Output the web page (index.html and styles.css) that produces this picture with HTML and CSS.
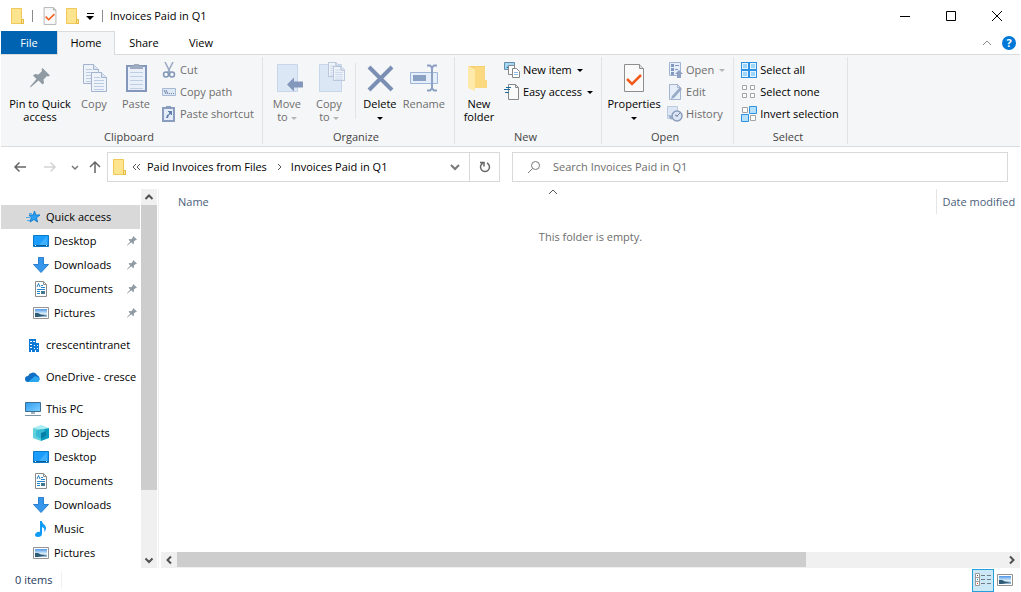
FILE: index.html
```
<!DOCTYPE html>
<html lang="en">

<head>
    <meta charset="UTF-8">
    <meta name="viewport" content="width=device-width, initial-scale=1.0">
    <title>Invoices Paid in Q1</title>
    <link rel="stylesheet" href="styles.css">
</head>

<body>
    <!-- shared icons -->
    <svg class="defs" width="0" height="0">
        <defs>
            <linearGradient id="sky" x1="0" y1="0" x2="0" y2="1">
                <stop offset="0" stop-color="#4d94e8" />
                <stop offset="0.55" stop-color="#d5ecf8" />
            </linearGradient>
            <linearGradient id="screen" x1="0" y1="0" x2="1" y2="1">
                <stop offset="0" stop-color="#2f9bf0" />
                <stop offset="1" stop-color="#7fd0ff" />
            </linearGradient>
        </defs>
        <symbol id="folder" viewBox="0 0 16 18">
            <path d="M2.500 1.500h10v11h2v4h-12z" fill="#ffe48f" stroke="#efc958" />
            <path d="M12.500 12.500h2v4h-2z" fill="#ffe9a2" stroke="#e5b93c" />
        </symbol>
        <symbol id="sheet-check" viewBox="0 0 32 32">
            <path d="M6.500 2.500h15l4 4v23h-19z" fill="#fafafa" stroke="#8e8e8e" />
            <path d="M21.500 2.500v4h4" fill="#ddd" stroke="#8e8e8e" />
            <path d="M9 17l5 5 9-9" fill="none" stroke="#f25c1b" stroke-width="2.500" />
        </symbol>
        <symbol id="pin" viewBox="0 0 20 20">
            <path d="M12.500 0L20 7.500l-2 1-1-.5-3.500 3.500.5 3.500-1.500 1.500-4-4L1 19l-1 .5.5-1.500 6-7-3.500-3.500L5 6l3.500.5L12 3l-.5-1.500z" fill="#8f9aa3" />
        </symbol>
        <symbol id="desktop" viewBox="0 0 16 16">
            <path d="M.5 2.500h15v11H.5z" fill="#1a9dfd" stroke="#0b79c9" />
            <path d="M6 12l8-9v9z" fill="#3fb0ff" />
            <path d="M1 12.500h14" stroke="#075c9c" />
            <path d="M2 12.500h1M13 12.500h1" stroke="#fff" />
        </symbol>
        <symbol id="download" viewBox="0 0 16 16">
            <path d="M5.500.5h5v7h5L8 15.500.5 7.500h5z" fill="#3796ea" stroke="#2a7fce" />
        </symbol>
        <symbol id="document" viewBox="0 0 16 16">
            <path d="M2.500.5h8l3 3v12h-11z" fill="#fff" stroke="#8c8c8c" />
            <path d="M10.500.5v3h3" fill="none" stroke="#8c8c8c" />
            <path d="M4 6l1.500-3.500L7 6M8 4.500h2M8 6.500h4M4 8.500h8M4 10.500h3M4 12.500h3" fill="none" stroke="#2684c8" />
            <path d="M8 10h4v3H8z" fill="#3f7895" />
        </symbol>
        <symbol id="picture" viewBox="0 0 16 16">
            <path d="M.5 2.500h15v11H.5z" fill="#fff" stroke="#939393" />
            <path d="M2 4h12v8H2z" fill="url(#sky)" />
            <path d="M2 8l3 0 3 1.500 6 .5v2H2z" fill="#315c78" />
            <path d="M5 12l9-2v2z" fill="#8fb4cc" />
        </symbol>
        <symbol id="up" viewBox="0 0 16 16">
            <path d="M4.500 10L8 6.500l3.500 3.500" fill="none" stroke="#505050" stroke-width="2" />
        </symbol>
        <symbol id="down" viewBox="0 0 16 16">
            <path d="M4.500 6.500L8 10l3.500-3.500" fill="none" stroke="#505050" stroke-width="2" />
        </symbol>
        <symbol id="dim-sheet" viewBox="0 0 16 20">
            <path d="M.5.5h10l5 5v14H.5z" fill="#eef3fa" stroke="#a3b3ce" />
            <path d="M10.500.5v5h5" fill="#dbe5f2" stroke="#a3b3ce" />
            <path d="M3 5.500h6M3 8.500h10M3 11.500h10M3 14.500h10M3 17.500h10" stroke="#bccbe4" />
        </symbol>
    </svg>

    <div class="window">
        <header class="titlebar">
            <svg class="title-icon" width="16" height="18"><use href="#folder" /></svg>
            <span class="bar"></span>
            <button class="quick" aria-label="Properties"><svg width="20" height="20"><use href="#sheet-check" /></svg></button>
            <button class="quick" aria-label="New folder"><svg width="16" height="18"><use href="#folder" /></svg></button>
            <button class="quick more" aria-label="Customize Quick Access Toolbar">
                <svg width="8" height="8"><path d="M1 1.500h7" stroke="#000" /><path d="M0 4h8L4 8z" /></svg>
            </button>
            <span class="bar"></span>
            <h1>Invoices Paid in Q1</h1>
            <div class="caption">
                <button aria-label="Minimize"><svg width="12" height="12"><path d="M1 6.500h10" stroke="#000" /></svg></button>
                <button aria-label="Maximize"><svg width="12" height="12"><path d="M1.500 1.500h9v9h-9z" fill="none" stroke="#000" /></svg></button>
                <button aria-label="Close"><svg width="12" height="12"><path d="M1 1l10 10M11 1L1 11" stroke="#000" /></svg></button>
            </div>
        </header>

        <nav class="tabs">
            <button class="tab file">File</button>
            <button class="tab active">Home</button>
            <button class="tab">Share</button>
            <button class="tab view-tab">View</button>
            <div class="tab-tools">
                <button aria-label="Minimize the Ribbon"><svg width="10" height="10"><path d="M1 7l4-4 4 4" fill="none" stroke="#8a8a8a" /></svg></button>
                <button class="help" aria-label="Help">?</button>
            </div>
        </nav>

        <section class="ribbon">
            <div class="group">
                <div class="tools">
                    <button class="big wide">
                        <svg width="32" height="32"><use href="#pin" x="6" y="6" width="20" height="20" /></svg>
                        <span>Pin to Quick<br>access</span>
                    </button>
                    <button class="big" disabled>
                        <svg width="32" height="32"><use href="#dim-sheet" x="5" y="2" width="16" height="20" /><use href="#dim-sheet" x="13" y="10" width="16" height="20" /></svg>
                        <span>Copy</span>
                    </button>
                    <button class="big" disabled>
                        <svg width="32" height="32">
                            <path d="M7 4h19v25H7z" fill="#e9f0fa" stroke="#8297bb" stroke-width="2" />
                            <path d="M10 10.500h13M10 14.500h13M10 18.500h13M10 22.500h13M10 26.500h13" stroke="#c0cee4" />
                            <path d="M10 7V4h4V2h5v2h4v3z" fill="#9eabc0" />
                        </svg>
                        <span>Paste</span>
                    </button>
                    <div class="list">
                        <button class="small" disabled>
                            <svg width="16" height="16">
                                <path d="M4 0l5.500 11M12 0L6.500 11" stroke="#96a7c2" stroke-width="1.500" />
                                <circle cx="5" cy="12.500" r="2.500" fill="none" stroke="#8398b9" stroke-width="1.500" />
                                <circle cx="11" cy="12.500" r="2.500" fill="none" stroke="#8398b9" stroke-width="1.500" />
                            </svg>Cut
                        </button>
                        <button class="small" disabled>
                            <svg width="16" height="16">
                                <path d="M1.500 4.500h13v7h-13z" fill="#dfe9f6" stroke="#a8b9d4" />
                                <path d="M3 6l2 4M5 6l2 4M8 9.500h1M10 9.500h1M12 9.500h1" stroke="#6f85aa" />
                            </svg>Copy path
                        </button>
                        <button class="small" disabled>
                            <svg width="16" height="16">
                                <path d="M2 2h11v13H2z" fill="#e3ecf8" stroke="#8a9dbe" stroke-width="2" />
                                <path d="M5 0h5v3H5z" fill="#8a9dbe" />
                                <path d="M5 12l1-3 2-1V6h-1V5h4v4h-1V8l-2 1-1 3z" fill="#6380ad" />
                            </svg>Paste shortcut
                        </button>
                    </div>
                </div>
                <div class="group-name">Clipboard</div>
            </div>

            <div class="group">
                <div class="tools">
                    <button class="big" disabled>
                        <svg width="32" height="32">
                            <path d="M6.500 2.500h20v27h-20z" fill="#dce7f6" stroke="#c8d6ea" />
                            <path d="M16 22.500l7-7v4h9v6h-9v4z" fill="#8398bb" />
                        </svg>
                        <span>Move<br>to <i class="arrow"></i></span>
                    </button>
                    <button class="big" disabled>
                        <svg width="32" height="32">
                            <path d="M6.500 2.500h22v27h-22z" fill="#dce7f6" stroke="#c8d6ea" />
                            <use href="#dim-sheet" x="15" y="0" width="12" height="15" /><use href="#dim-sheet" x="20" y="4" width="12" height="15" />
                        </svg>
                        <span>Copy<br>to <i class="arrow"></i></span>
                    </button>
                    <span class="tool-line"></span>
                    <button class="big medium">
                        <svg width="32" height="32"><path d="M5 5l23 23M28 5L5 28" stroke="#7a8fb3" stroke-width="4" /></svg>
                        <span>Delete<br><i class="arrow"></i></span>
                    </button>
                    <button class="big medium" disabled>
                        <svg width="32" height="32">
                            <path d="M2.500 10.500h27v11h-27z" fill="#e5eefb" stroke="#a0b6d6" />
                            <path d="M5 13h13v6H5z" fill="#8ba1c4" />
                            <path d="M19 3.500h3l2 2 2-2h3M24 5v22M19 28.500h3l2-2 2 2h3" fill="none" stroke="#8ba0c2" stroke-width="2" />
                        </svg>
                        <span>Rename</span>
                    </button>
                </div>
                <div class="group-name">Organize</div>
            </div>

            <div class="group">
                <div class="tools">
                    <button class="big">
                        <svg width="32" height="32">
                            <path d="M6 4h16v14h2v8H12z" fill="#f6d06f" />
                            <path d="M12 5h10v13l2 1v7H12z" fill="#fbd980" />
                            <path d="M5 4l7 3v22l-7-3z" fill="#ffeaa9" />
                        </svg>
                        <span>New<br>folder</span>
                    </button>
                    <div class="list">
                        <button class="small">
                            <svg width="16" height="16">
                                <path d="M.5.5h10v7H.5z" fill="#a4d8f8" stroke="#668ca6" />
                                <path d="M2 6l3-3 3 3z" fill="#287faf" />
                                <path d="M4.500 3.500h6v9h-6z" fill="#fff" stroke="#888" />
                                <path d="M8.500 6.500h4l3 3v6h-7z" fill="#fff" stroke="#888" />
                                <path d="M10 10.500h4M10 12.500h4" stroke="#8db9e4" />
                            </svg>New item <i class="arrow"></i>
                        </button>
                        <button class="small">
                            <svg width="16" height="16">
                                <path d="M4.500.5h7l3 3v12h-10z" fill="#fafafa" stroke="#888" />
                                <path d="M11.500.5v3h3" fill="none" stroke="#888" />
                                <path d="M2 3.500h5M0 5.500h6M1 8.500h4" stroke="#206b9e" />
                            </svg>Easy access <i class="arrow"></i>
                        </button>
                    </div>
                </div>
                <div class="group-name">New</div>
            </div>

            <div class="group">
                <div class="tools">
                    <button class="big props">
                        <svg width="32" height="32"><use href="#sheet-check" /></svg>
                        <span>Properties<br><i class="arrow"></i></span>
                    </button>
                    <div class="list">
                        <button class="small" disabled>
                            <svg width="16" height="16">
                                <path d="M2.500.5h11v13h-11z" fill="#e6eef9" stroke="#a3b4d0" />
                                <path d="M4 2h3v3H4zM4 6h3v3H4zM4 10h3v3H4z" fill="#8198c0" />
                                <path d="M8 3.500h4M8 7.500h3" stroke="#8198c0" />
                                <path d="M12 8l4 4h-2v4h-4v-4H8z" fill="#8ea1c2" />
                            </svg>Open <i class="arrow"></i>
                        </button>
                        <button class="small" disabled>
                            <svg width="16" height="16">
                                <path d="M2.500.5h8l3 3v12h-11z" fill="#e6eef9" stroke="#a3b4d0" />
                                <path d="M10.500.5v3h3" fill="none" stroke="#a3b4d0" />
                                <path d="M4 15l1-3 8-9 2 2-8 9z" fill="#98aac8" />
                            </svg>Edit
                        </button>
                        <button class="small" disabled>
                            <svg width="16" height="16">
                                <path d="M.5.5h10v12H.5z" fill="#dce6f4" stroke="#bdcbdf" />
                                <circle cx="10" cy="10" r="5" fill="#dce6f4" stroke="#8b9dbb" stroke-width="1.500" />
                                <path d="M13 7l-3 3-2-1M10 10v1" fill="none" stroke="#7085a8" />
                                <path d="M1 9l3 5 2-4z" fill="#94a7c5" />
                            </svg>History
                        </button>
                    </div>
                </div>
                <div class="group-name">Open</div>
            </div>

            <div class="group">
                <div class="tools">
                    <div class="list">
                        <button class="small">
                            <svg width="16" height="16">
                                <path d="M0 0h16v16H0z" fill="#2f91e3" />
                                <path d="M1 1h6v6H1zM9 1h6v6H9zM1 9h6v6H1zM9 9h6v6H9z" fill="#e3f4ff" />
                                <path d="M2 2h4v4H2zM10 2h4v4h-4zM2 10h4v4H2zM10 10h4v4h-4z" fill="#9ed6fb" />
                            </svg>Select all
                        </button>
                        <button class="small">
                            <svg width="16" height="16"><path d="M1.500 1.500h4v4h-4zM9.500 1.500h4v4h-4zM1.500 9.500h4v4h-4zM9.500 9.500h4v4h-4z" fill="#fff" stroke="#a3a3a3" /></svg>Select none
                        </button>
                        <button class="small">
                            <svg width="16" height="16">
                                <path d="M1.500 1.500h5v5h-5zM9.500 9.500h5v5h-5z" fill="#fff" stroke="#a3a3a3" />
                                <path d="M8.500.5h7v7h-7zM.5 8.500h7v7h-7z" fill="#b5e0fc" stroke="#2f91e3" />
                            </svg>Invert selection
                        </button>
                    </div>
                </div>
                <div class="group-name">Select</div>
            </div>
        </section>

        <div class="navbar">
            <div class="history">
                <button aria-label="Back"><svg width="14" height="14"><path d="M13 7H2M6.500 2.500L2 7l4.500 4.500" fill="none" stroke="#666" stroke-width="1.500" /></svg></button>
                <button aria-label="Forward" disabled><svg width="14" height="14"><path d="M1 7h11M7.500 2.500L12 7l-4.500 4.500" fill="none" stroke="#d3d3d3" stroke-width="1.500" /></svg></button>
                <button class="recent" aria-label="Recent locations"><svg width="8" height="8"><path d="M1 3l3 3 3-3" fill="none" stroke="#777" stroke-width="1.500" /></svg></button>
                <button class="recent" aria-label="Up"><svg width="14" height="14"><path d="M7 13V2M2 7l5-5 5 5" fill="none" stroke="#666" stroke-width="1.500" /></svg></button>
            </div>
            <div class="address">
                <svg width="16" height="18"><use href="#folder" /></svg>
                <button class="crumb-sep" aria-label="Parent folders"><svg width="10" height="10"><path d="M4 2L1 5l3 3M8 2L5 5l3 3" fill="none" stroke="#555" /></svg></button>
                <a href="#">Paid Invoices from Files</a>
                <button class="crumb-sep" aria-label="Subfolders"><svg width="10" height="10"><path d="M4 2l3 3-3 3" fill="none" stroke="#555" /></svg></button>
                <a href="#">Invoices Paid in Q1</a>
                <button class="drop" aria-label="Previous locations"><svg width="10" height="10"><path d="M1 3l4 4 4-4" fill="none" stroke="#777" stroke-width="2" /></svg></button>
                <button class="refresh" aria-label="Refresh"><svg width="14" height="14"><path d="M9 3a4.500 4.500 0 1 1-4 0" fill="none" stroke="#666" stroke-width="1.500" /><path d="M2 2.500h4v4" fill="none" stroke="#666" stroke-width="1.500" /></svg></button>
            </div>
            <label class="search">
                <svg width="14" height="14"><circle cx="8.500" cy="5.500" r="4" fill="none" stroke="#777" /><path d="M5.500 8.500L1 13" stroke="#777" /></svg>
                <input type="text" placeholder="Search Invoices Paid in Q1" aria-label="Search">
            </label>
        </div>

        <main class="content">
            <aside class="sidebar">
                <ul class="tree">
                    <li class="root selected"><a href="#"><svg width="16" height="16"><path d="M9.500 2l1.200 4H15l-3.500 2.700L12.500 13 9 10.500 5 13l1.300-4.300L4 6h4.300z" fill="#2ba0f3" stroke="#1580d0" /><path d="M4 4.500h3M1 8.500h4M2 11.500h3" stroke="#4fadef" /></svg>Quick access</a></li>
                    <li><a href="#"><svg width="16" height="16"><use href="#desktop" /></svg>Desktop</a><svg class="pinned" width="10" height="10"><use href="#pin" /></svg></li>
                    <li><a href="#"><svg width="16" height="16"><use href="#download" /></svg>Downloads</a><svg class="pinned" width="10" height="10"><use href="#pin" /></svg></li>
                    <li><a href="#"><svg width="16" height="16"><use href="#document" /></svg>Documents</a><svg class="pinned" width="10" height="10"><use href="#pin" /></svg></li>
                    <li><a href="#"><svg width="16" height="16"><use href="#picture" /></svg>Pictures</a><svg class="pinned" width="10" height="10"><use href="#pin" /></svg></li>
                    <li class="root"><a href="#"><svg width="16" height="16"><path d="M4 2h7v4h3v9h-3v-2h-1v2H7v-2H6v2H4z" fill="#0a78d4" /><path d="M5 4h2v1H5zM8 4h2v1H8zM5 7h2v1H5zM5 10h2v1H5zM9 8h1v1H9zM12 8h1v1h-1zM9 11h1v1H9zM12 11h1v1h-1z" fill="#fff" /></svg>crescentintranet</a></li>
                    <li class="root"><a href="#"><svg width="16" height="16"><path d="M3 13a3 3 0 0 1 0-6 5 5 0 0 1 9-1 4 4 0 0 1 1 7z" fill="#0f6fc5" /><path d="M3 13l7-6 3 1a3 3 0 0 1 0 5z" fill="#2aa7ee" /></svg>OneDrive - cresce</a></li>
                    <li class="root"><a href="#"><svg width="16" height="16"><path d="M.5 1.500h15v9H.5z" fill="url(#screen)" stroke="#3e6f92" /><path d="M6 11h4v2H6z" fill="#9eb2c2" /><path d="M0 14.500h16" stroke="#7d92a1" /></svg>This PC</a></li>
                    <li><a href="#"><svg width="16" height="16"><path d="M0 3l8-3 8 3-8 3z" fill="#a9edf3" /><path d="M0 3l8 2v11l-8-3z" fill="#5fd0dc" /><path d="M8 5l8-2v10l-8 3z" fill="#079bbd" /><path d="M3 6l5-2 5 2v5l-5 3-5-3z" fill="#38b9d4" /><path d="M8 8l5-2v5l-5 3z" fill="#067fa8" /></svg>3D Objects</a></li>
                    <li><a href="#"><svg width="16" height="16"><use href="#desktop" /></svg>Desktop</a></li>
                    <li><a href="#"><svg width="16" height="16"><use href="#document" /></svg>Documents</a></li>
                    <li><a href="#"><svg width="16" height="16"><use href="#download" /></svg>Downloads</a></li>
                    <li><a href="#"><svg width="16" height="16"><path d="M7 0h2c0 3 4 4 4 7 0 2-1 3-2 4 1-3 0-4-2-5v7c0 2-2 3-4 3s-3-1-3-2c0-2 3-4 5-3z" fill="#109bf5" /></svg>Music</a></li>
                    <li><a href="#"><svg width="16" height="16"><use href="#picture" /></svg>Pictures</a></li>
                </ul>
                <div class="scroll vertical">
                    <button aria-label="Scroll up"><svg width="16" height="16"><use href="#up" /></svg></button>
                    <div class="track"><div class="thumb"></div></div>
                    <button aria-label="Scroll down"><svg width="16" height="16"><use href="#down" /></svg></button>
                </div>
            </aside>

            <section class="files">
                <table>
                    <thead>
                        <tr>
                            <th class="name">Name<svg class="sort" width="10" height="6"><path d="M1 5l4-4 4 4" fill="none" stroke="#555" /></svg></th>
                            <th class="date">Date modified</th>
                        </tr>
                    </thead>
                </table>
                <p class="empty">This folder is empty.</p>
                <div class="scroll horizontal">
                    <button aria-label="Scroll left"><svg width="16" height="16"><use href="#up" transform="rotate(-90 8 8)" /></svg></button>
                    <div class="track"><div class="thumb"></div></div>
                    <button aria-label="Scroll right"><svg width="16" height="16"><use href="#up" transform="rotate(90 8 8)" /></svg></button>
                </div>
            </section>
        </main>

        <footer class="status">
            <span class="count">0 items</span>
            <button class="view on" aria-label="Details view">
                <svg width="16" height="14">
                    <path d="M.5.500h4v4h-4zM.5 4.500h4v4h-4zM.5 8.500h4v4h-4z" fill="#fff" stroke="#999" />
                    <path d="M2 2.500h1" stroke="#555" /><path d="M2 6.500h1" stroke="#28c" /><path d="M2 10.500h1" stroke="#e30" />
                    <path d="M6 2.500h4M12 2.500h4M6 6.500h4M12 6.500h4M6 10.500h4M12 10.500h4" stroke="#6f7d85" />
                </svg>
            </button>
            <button class="view" aria-label="Large icons view"><svg width="16" height="16"><use href="#picture" /></svg></button>
        </footer>
    </div>
</body>

</html>
```

FILE: styles.css
```
* {
    margin: 0;
    padding: 0;
    box-sizing: border-box;
}

body {
    font: 11px/16px "Open Sans", "Noto Sans", sans-serif;
    color: #000;
    background-color: #fff;
}

button,
input {
    font: inherit;
    color: inherit;
    border: 0;
    background: none;
}

button {
    display: flex;
    align-items: center;
    justify-content: center;
}

a {
    color: inherit;
    text-decoration: none;
}

svg {
    flex: none;
}

.defs {
    position: absolute;
}

.window {
    display: flex;
    flex-direction: column;
    height: 100vh;
    padding: 0 1px;
    overflow: hidden;
}

/* title bar */
.titlebar {
    display: flex;
    align-items: center;
    height: 31px;
    padding-left: 8px;
    flex: none;
}

.titlebar h1 {
    font-size: 11px;
    font-weight: normal;
    padding-left: 7px;
}

.titlebar .bar {
    width: 1px;
    height: 12px;
    margin-left: 7px;
    background-color: #8a8a8a;
}

.quick {
    width: 22px;
    height: 24px;
}

.bar + .quick {
    margin-left: 6px;
}

.quick.more {
    width: 14px;
}

.quick.more + .bar {
    margin-left: 5px;
}

.caption {
    display: flex;
    margin-left: auto;
}

.caption button {
    width: 46px;
    height: 30px;
}

/* tabs */
.tabs {
    display: flex;
    height: 24px;
    flex: none;
    border-bottom: 1px solid #dadbdc;
}

.tab {
    width: 58px;
    height: 23px;
}

.tab.file {
    width: 56px;
    color: #fff;
    background-color: #0063b1;
}

.tab.active {
    height: 24px;
    padding-bottom: 2px;
    border: 1px solid #dadbdc;
    border-bottom: 0;
    background-color: #f5f6f7;
}

.tab.view-tab {
    width: 56px;
}

.tab-tools {
    display: flex;
    align-items: center;
    gap: 10px;
    margin-left: auto;
    padding-right: 4px;
}

.help {
    width: 14px;
    height: 14px;
    border-radius: 50%;
    color: #fff;
    font-weight: bold;
    background-color: #0078d7;
}

/* ribbon */
.ribbon {
    display: flex;
    height: 92px;
    flex: none;
    padding-top: 2px;
    border-bottom: 1px solid #dadbdc;
    background-color: #f5f6f7;
}

.group {
    height: 87px;
    padding: 2px 8px 0 3px;
    border-right: 1px solid #e2e3e4;
}

.tools {
    display: flex;
    height: 70px;
}

.group-name {
    text-align: center;
    line-height: 16px;
    color: #444;
}

.big {
    flex-direction: column;
    justify-content: flex-start;
    width: 42px;
    height: 68px;
    padding-top: 3px;
    gap: 3px;
    line-height: 13px;
    white-space: nowrap;
}

.big.wide {
    width: 66px;
    margin-left: 3px;
}

.big.medium {
    width: 44px;
}

.big.props {
    width: 58px;
}

.tool-line {
    width: 1px;
    height: 56px;
    margin: 4px 2px 0 5px;
    background-color: #e2e3e4;
}

.list {
    padding-left: 4px;
}

.small {
    height: 22px;
    gap: 3px;
    white-space: nowrap;
}

button:disabled {
    color: #6d6d6d;
}

.arrow {
    display: inline-block;
    border: 3px solid transparent;
    border-top-color: currentColor;
    border-bottom: 0;
    vertical-align: middle;
}

.small .arrow {
    margin-left: 2px;
}

button:disabled .arrow {
    border-top-color: #b5b5b5;
}

/* address bar */
.navbar {
    display: flex;
    height: 40px;
    flex: none;
    align-items: center;
    padding-right: 12px;
}

.history {
    display: flex;
    width: 106px;
    padding-left: 4px;
}

.history button {
    width: 30px;
    height: 30px;
}

.history .recent {
    width: 20px;
}

.address {
    display: flex;
    align-items: center;
    flex: 0 1 393px;
    height: 30px;
    margin-right: 12px;
    padding-left: 3px;
    border: 1px solid #d9d9d9;
    white-space: nowrap;
}

.crumb-sep {
    width: 20px;
    height: 28px;
}

.address a + .crumb-sep {
    width: 24px;
}

.drop {
    width: 28px;
    height: 28px;
    margin-left: auto;
}

.refresh {
    width: 30px;
    height: 28px;
    border-left: 1px solid #d9d9d9;
}

.search {
    display: flex;
    align-items: center;
    flex: 1;
    height: 30px;
    padding-left: 14px;
    gap: 12px;
    border: 1px solid #d9d9d9;
}

.search input {
    flex: 1;
    min-width: 0;
    outline: none;
}

.search input::placeholder {
    color: #6d6d6d;
}

/* main area */
.content {
    display: flex;
    flex: 1;
    min-height: 0;
    padding-top: 2px;
}

.sidebar {
    display: flex;
    width: 158px;
    flex: none;
    padding-right: 1px;
    border-right: 1px solid #f0f0f0;
}

.tree {
    flex: 1;
    min-width: 0;
    padding-top: 16px;
    overflow: hidden;
    list-style: none;
}

.tree li {
    display: flex;
    align-items: center;
    height: 24px;
    padding: 0 3px 0 32px;
}

.tree li.root {
    margin-top: 8px;
    padding: 0 0 0 24px;
}

.tree li.selected {
    margin-top: 0;
    background-color: #d9d9d9;
}

.tree a {
    display: flex;
    align-items: center;
    gap: 5px;
    white-space: nowrap;
}

.pinned {
    margin-left: auto;
}

.scroll {
    display: flex;
    background-color: #f0f0f0;
}

.scroll button {
    width: 16px;
    height: 16px;
}

.scroll .track {
    flex: 1;
}

.scroll .thumb {
    background-color: #cdcdcd;
}

.vertical {
    flex-direction: column;
    margin-left: 1px;
}

.vertical .thumb {
    height: 82%;
}

.horizontal {
    margin-top: auto;
}

.horizontal .thumb {
    width: 76%;
    height: 15px;
}

.files {
    display: flex;
    flex-direction: column;
    flex: 1;
    min-width: 0;
    margin-left: 2px;
}

.files table {
    width: 100%;
    table-layout: fixed;
    border-collapse: collapse;
}

.files th {
    height: 25px;
    font-weight: normal;
    text-align: left;
    white-space: nowrap;
    color: #4c607a;
}

.files .name {
    position: relative;
    padding-left: 17px;
}

.files .date {
    width: 84px;
    padding-left: 6px;
    border-left: 1px solid #e5e5e5;
}

.sort {
    position: absolute;
    top: 0;
    left: 50%;
}

.empty {
    padding-top: 15px;
    text-align: center;
    color: #6d6d6d;
}

/* status bar */
.status {
    display: flex;
    align-items: center;
    height: 24px;
    flex: none;
    padding-right: 4px;
}

.count {
    margin-right: auto;
    padding: 0 9px 0 14px;
    border-right: 1px solid #f0f0f0;
    color: #1e395b;
}

.view {
    width: 22px;
    height: 23px;
}

.view.on {
    border: 1px solid #26a0da;
    background-color: #cce8f6;
}
```
